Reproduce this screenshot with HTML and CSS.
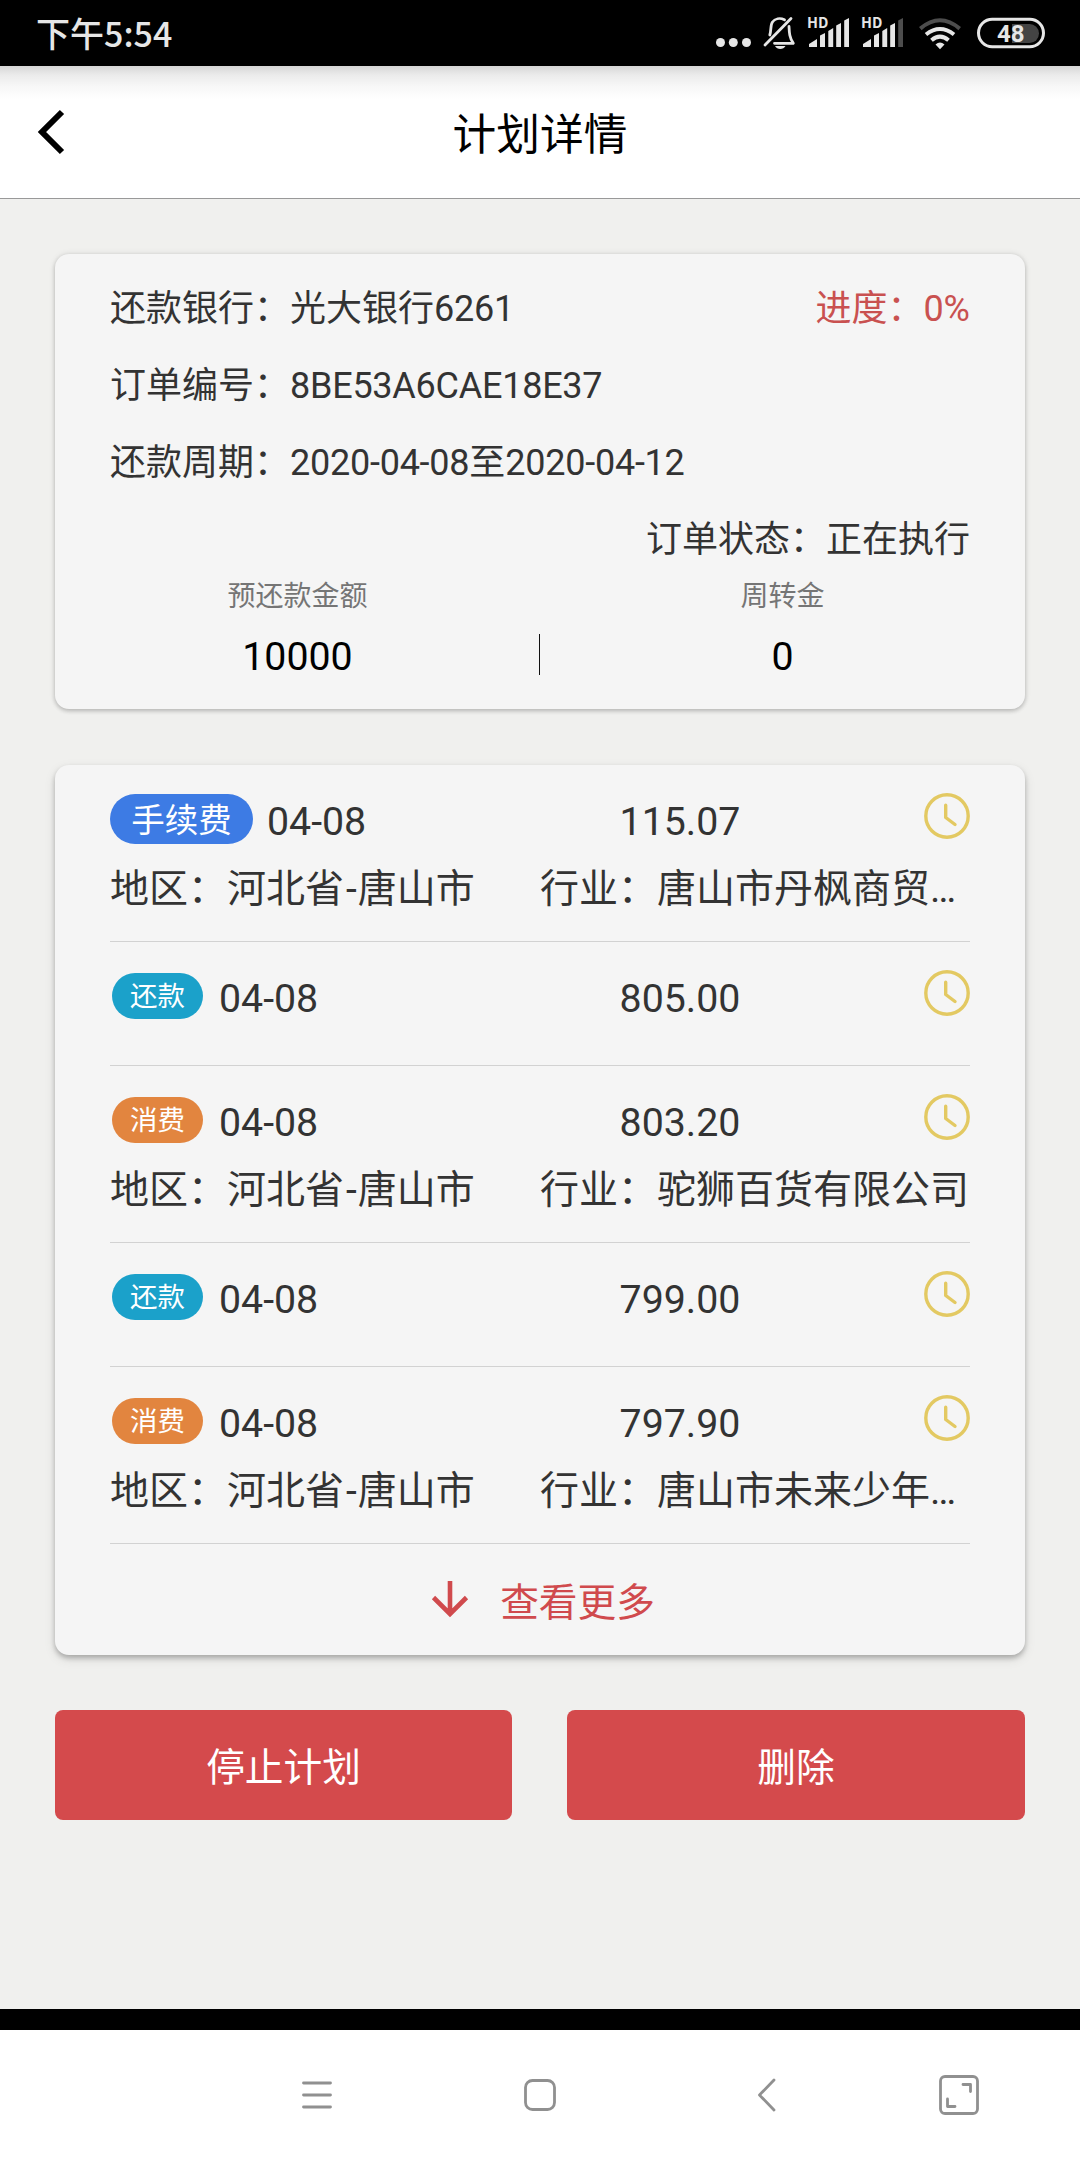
FILE: index.html
```html
<!DOCTYPE html>
<html lang="zh-CN">
<head>
<meta charset="utf-8">
<title>计划详情</title>
<link rel="stylesheet" href="styles.css">
</head>
<body>
<svg class="defs" width="0" height="0">
  <symbol id="clock" viewBox="0 0 46 46">
    <circle cx="23" cy="23" r="21.2" fill="none" stroke="currentColor" stroke-width="3.4"/>
    <path d="M21.7 12.3V24.5L31 31.5" fill="none" stroke="currentColor" stroke-width="3.4" stroke-linecap="round" stroke-linejoin="round"/>
  </symbol>
</svg>
<div class="screen">
  <div class="status-bar">
    <span class="time">下午5:54</span>
    <svg class="status-icons" width="380" height="66" viewBox="0 0 380 66" fill="#e6e6e6">
      <circle cx="20.5" cy="42.5" r="4.5"/><circle cx="33.3" cy="42.5" r="4.5"/><circle cx="46.5" cy="42.5" r="4.5"/>
      <g fill="none" stroke="#e6e6e6" stroke-width="2.8" stroke-linecap="round" stroke-linejoin="round">
        <path d="M65 45L91 18.5"/>
        <path d="M84.5 19.8C80 17.7 75 18.5 72.3 22.3C70.3 25.2 71.3 31 69.8 35"/>
        <path d="M89 26.5C89.3 33 89.5 37.5 93.3 43.3H74.5"/>
      </g>
      <path d="M75 46H85.5C83.5 50 77 50 75 46Z"/>
      <text class="hd" x="107" y="28">HD</text>
      <path d="M109 44L117 39V47H109ZM120 35.5L125 33V47H120ZM128.3 31L133.2 28V47H128.3ZM136.2 25.5L141 23V47H136.2ZM144.2 20.5L149 18V47H144.2Z"/>
      <text class="hd" x="161" y="28">HD</text>
      <path d="M163 44L171 39V47H163ZM174 35.5L179 33V47H174ZM182.3 31L187.2 28V47H182.3ZM190.2 25.5L195 23V47H190.2Z"/>
      <path fill="#4d4d4d" d="M198.2 20.5L203 18V47H198.2Z"/>
      <g fill="none" stroke="#e6e6e6" stroke-width="4">
        <path stroke="#4d4d4d" d="M220.3 28.6Q240 12 259.7 28.6"/>
        <path d="M226 34.5Q240 23.5 254 34.5"/>
        <path d="M231.5 40.3Q240 33 248.5 40.3"/>
      </g>
      <path d="M235.500 44.500Q240 40.500 244.500 44.500L240 49.200Z"/>
      <rect x="278.5" y="19.3" width="65" height="27.4" rx="13.7" fill="none" stroke="#e6e6e6" stroke-width="3"/>
      <path fill="#444" d="M312 24H329.5A9.5 9.5 0 0 1 329.5 43H312Z"/>
      <text class="battery" x="297" y="42">48</text>
    </svg>
  </div>

  <header class="header">
    <svg class="back" width="30" height="48" viewBox="0 0 30 48"><path d="M26 4L6 24L26 44" fill="none" stroke="#000" stroke-width="6"/></svg>
    <h1 class="title">计划详情</h1>
  </header>

  <main class="content">
    <section class="card summary">
      <div class="line"><span>还款银行：光大银行<span class="latin">6261</span></span><span class="progress">进度：0%</span></div>
      <div class="line"><span>订单编号：<span class="latin">8BE53A6CAE18E37</span></span></div>
      <div class="line"><span>还款周期：<span class="latin">2020-04-08</span>至<span class="latin">2020-04-12</span></span></div>
      <div class="line state">订单状态：正在执行</div>
      <div class="amounts">
        <div class="amount"><div class="label">预还款金额</div><div class="value">10000</div></div>
        <div class="divider"></div>
        <div class="amount"><div class="label">周转金</div><div class="value">0</div></div>
      </div>
    </section>

    <section class="card list">
      <div class="item tall">
        <div class="head"><div class="tag-date"><span class="badge fee">手续费</span><span class="num">04-08</span></div><span class="num sum">115.07</span><svg class="clock"><use href="#clock"/></svg></div>
        <div class="info"><span>地区：河北省<span class="dash">-</span>唐山市</span><span>行业：唐山市丹枫商贸…</span></div>
      </div>
      <div class="item">
        <div class="head"><div class="tag-date"><span class="badge repay">还款</span><span class="num">04-08</span></div><span class="num sum">805.00</span><svg class="clock"><use href="#clock"/></svg></div>
      </div>
      <div class="item tall">
        <div class="head"><div class="tag-date"><span class="badge spend">消费</span><span class="num">04-08</span></div><span class="num sum">803.20</span><svg class="clock"><use href="#clock"/></svg></div>
        <div class="info"><span>地区：河北省<span class="dash">-</span>唐山市</span><span>行业：驼狮百货有限公司</span></div>
      </div>
      <div class="item">
        <div class="head"><div class="tag-date"><span class="badge repay">还款</span><span class="num">04-08</span></div><span class="num sum">799.00</span><svg class="clock"><use href="#clock"/></svg></div>
      </div>
      <div class="item tall">
        <div class="head"><div class="tag-date"><span class="badge spend">消费</span><span class="num">04-08</span></div><span class="num sum">797.90</span><svg class="clock"><use href="#clock"/></svg></div>
        <div class="info"><span>地区：河北省<span class="dash">-</span>唐山市</span><span>行业：唐山市未来少年…</span></div>
      </div>
      <div class="more">
        <svg width="38" height="38" viewBox="0 0 38 38"><path d="M19 1V34M2.5 17.5L19 34L35.5 17.5" fill="none" stroke="currentColor" stroke-width="4.6"/></svg>
        <span>查看更多</span>
      </div>
    </section>

    <div class="actions">
      <button class="btn">停止计划</button>
      <button class="btn">删除</button>
    </div>
  </main>

  <div class="strip"></div>
  <nav class="nav">
    <svg width="34" height="34" viewBox="0 0 34 34"><path d="M3.5 5H30.5M3.5 17H30.5M3.5 29H30.5"/></svg>
    <svg width="34" height="34" viewBox="0 0 34 34"><rect x="2.5" y="2.5" width="29" height="29" rx="7"/></svg>
    <svg width="34" height="34" viewBox="0 0 34 34"><path d="M25 2L10.5 17L25 32"/></svg>
    <svg width="40" height="40" viewBox="0 0 40 40"><rect x="1.5" y="1.5" width="37" height="37" rx="4.5"/><path d="M24 9.5H31.5V16.5M8.5 24V31.5H16"/></svg>
  </nav>
</div>
</body>
</html>
```
FILE: styles.css
```css
* {
  box-sizing: border-box;
}

body {
  margin: 0;
  font-family: Roboto, "Noto Sans CJK SC", sans-serif;
  color: #333;
}

.defs {
  display: block;
}

.screen {
  width: 1080px;
  height: 2160px;
  display: flex;
  flex-direction: column;
  overflow: hidden;
  background: #f0f0ee;
}

.status-bar {
  height: 66px;
  flex: none;
  display: flex;
  justify-content: space-between;
  padding-left: 36px;
  background: #000;
  color: #e6e6e6;
}

.time {
  font: 500 34px/66px "Noto Sans CJK SC", sans-serif;
}

.hd {
  font: 700 14.5px "Noto Sans CJK SC", sans-serif;
}

.battery {
  font: 700 24px Roboto, sans-serif;
}

.header {
  height: 133px;
  flex: none;
  display: grid;
  grid-template-columns: 105px 1fr 105px;
  align-items: center;
  border-bottom: 1px solid #999;
  background: linear-gradient(#d6d6d6, #ebebeb 9px, #f7f7f7 20px, #fff 33px);
}

.back {
  margin: 0 0 1px 36px;
}

.title {
  margin: 0;
  padding-top: 5px;
  font-size: 43.7px;
  font-weight: 400;
  line-height: 60px;
  text-align: center;
  color: #000;
}

.content {
  flex: 1;
  padding: 55px 55px 0;
}

.card {
  border-radius: 14px;
  background: #f5f5f5;
}

.summary {
  height: 455px;
  padding-top: 17px;
  margin-bottom: 56px;
  box-shadow: 0 2px 4px rgba(0, 0, 0, 0.2), 0 0 6px rgba(0, 0, 0, 0.1);
}

.line {
  display: flex;
  justify-content: space-between;
  padding: 0 55px;
  font-size: 36px;
  line-height: 77px;
}

.latin {
  letter-spacing: -0.25px;
}

.state {
  justify-content: flex-end;
}

.progress {
  color: #c95150;
}

.amounts {
  display: flex;
  align-items: flex-start;
}

.amount {
  flex: 1;
  margin-top: -1px;
  text-align: center;
}

.label {
  font-size: 28px;
  line-height: 37px;
  color: #757575;
}

.value {
  margin-top: 12px;
  font-size: 39.3px;
  line-height: 60px;
  color: #000;
}

.divider {
  width: 1px;
  height: 41px;
  margin: 55px 0 0 -1px;
  background: #111;
}

.list {
  height: 890px;
  padding: 0 55px;
  box-shadow: 0 3px 5px rgba(0, 0, 0, 0.24), 0 4px 12px rgba(0, 0, 0, 0.1);
}

.item {
  height: 124px;
  padding-top: 28px;
  border-bottom: 1px solid #d2d2d2;
}

.tall {
  height: 177px;
}

.head {
  height: 50px;
  display: grid;
  grid-template-columns: 430px 280px 1fr;
  align-items: center;
}

.tag-date {
  display: flex;
  align-items: center;
}

.num {
  padding-top: 5px;
  font-size: 39.3px;
  line-height: 44px;
}

.sum {
  text-align: center;
}

.badge {
  width: 91px;
  height: 46px;
  margin: 0 16px 0 2px;
  border-radius: 23px;
  font-size: 27.5px;
  line-height: 48px;
  text-align: center;
  color: #fff;
}

.fee {
  width: 143px;
  height: 50px;
  margin: 0 14px 0 0;
  border-radius: 25px;
  font-size: 33.5px;
  line-height: 54px;
  background: #3d7be4;
}

.repay {
  background: #1ba1ca;
}

.spend {
  background: #e2853f;
}

.clock {
  width: 46px;
  height: 46px;
  margin-bottom: 6px;
  justify-self: end;
  color: #e3c962;
}

.info {
  display: grid;
  grid-template-columns: 430px 430px;
  margin-top: 18px;
  font-size: 39px;
  line-height: 56px;
  white-space: nowrap;
}

.dash {
  padding: 0 1px 0 2px;
}

.more {
  height: 111px;
  display: flex;
  align-items: center;
  justify-content: center;
  gap: 31px;
  padding-left: 6px;
  font-size: 38.7px;
  color: #d04a4d;
}

.more svg {
  margin-bottom: 2px;
}

.more span {
  padding-bottom: 2px;
}

.actions {
  display: grid;
  grid-template-columns: 457px 458px;
  gap: 55px;
  margin-top: 55px;
}

.btn {
  height: 110px;
  padding: 0 0 3px;
  border: 0;
  border-radius: 8px;
  font: 400 38.7px Roboto, "Noto Sans CJK SC", sans-serif;
  color: #fff;
  background: #d44a4c;
}

.strip {
  height: 21px;
  flex: none;
  background: #000;
}

.nav {
  height: 130px;
  flex: none;
  display: grid;
  grid-template-columns: 224px 222px 230px 156px;
  place-items: center;
  padding-left: 205px;
  background: #fff;
}

.nav svg {
  fill: none;
  stroke: #909090;
  stroke-width: 2.8;
  stroke-linecap: round;
  stroke-linejoin: round;
}
```
